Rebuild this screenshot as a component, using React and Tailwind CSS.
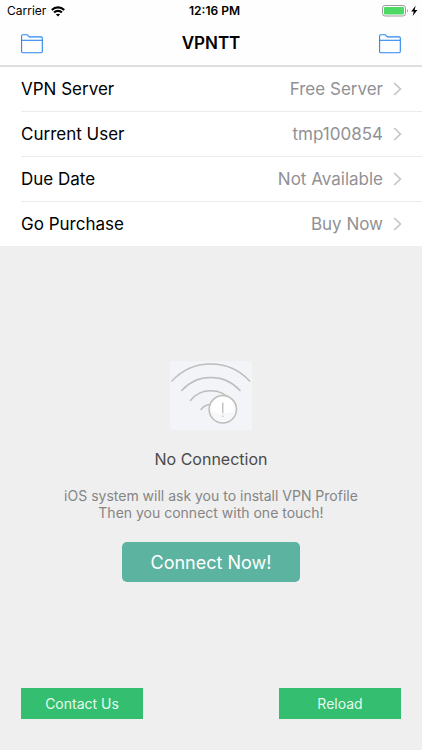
const rows = [
  { label: "VPN Server", value: "Free Server" },
  { label: "Current User", value: "tmp100854" },
  { label: "Due Date", value: "Not Available" },
  { label: "Go Purchase", value: "Buy Now" },
];

function WifiIcon() {
  return (
    <svg width="14" height="11" viewBox="0 0 14 11" fill="none" stroke="#000" strokeWidth="2.1" aria-hidden="true">
      <path d="M0.8 4C4.2 0.5 9.8 0.5 13.2 4" />
      <path d="M3.1 6.5C5.2 4.3 8.8 4.3 10.9 6.5" />
      <path d="M7 10.6L4.9 8.5C6.1 7.4 7.9 7.4 9.1 8.5Z" fill="#000" stroke="none" />
    </svg>
  );
}

function BatteryIcon() {
  return (
    <svg width="36" height="12" viewBox="0 0 36 12" aria-hidden="true">
      <rect x="0.5" y="0.5" width="23" height="10.5" rx="2.6" fill="#fff" stroke="#9b9b9b" />
      <rect x="2" y="2" width="20" height="7.5" rx="1.2" fill="#4cd964" />
      <path d="M25 4C26.2 4.4 26.2 7.1 25 7.5Z" fill="#9b9b9b" />
      <path d="M33.6 0.8L29.2 6.5H31.8L30.7 11L35.4 4.9H32.7Z" fill="#000" />
    </svg>
  );
}

function FolderIcon() {
  return (
    <svg width="22" height="20" viewBox="0 0 22 20" fill="none" stroke="#2b86ee" strokeWidth="1.1" strokeLinejoin="round" aria-hidden="true">
      <path d="M0.6 17.6V1.8Q0.6 0.7 1.7 0.7H5.8Q6.7 0.7 7.1 1.5L7.5 2.2Q7.9 2.9 8.8 2.9H20.2Q21.3 2.9 21.3 4V17.6Q21.3 18.7 20.2 18.7H1.7Q0.6 18.7 0.6 17.6Z" />
      <path d="M0.6 6.3H21.3" />
    </svg>
  );
}

function Chevron() {
  return (
    <svg width="9" height="14" viewBox="0 0 9 14" fill="none" stroke="#c5c5ca" strokeWidth="1.7" aria-hidden="true">
      <path d="M1.2 1L7.4 7L1.2 13" />
    </svg>
  );
}

function NoConnectionArt() {
  return (
    <svg width="82" height="69" viewBox="0 0 82 69" fill="none" stroke="#bdbdbd" strokeWidth="1.5" strokeLinecap="round" role="img" aria-label="No connection">
      <rect width="82" height="69" fill="#f3f4f7" stroke="none" />
      <path d="M2 20A52.8 52.8 0 0 1 79.6 20" />
      <path d="M11.7 29.5A39.3 39.3 0 0 1 70 29.5" />
      <path d="M20.5 39.5A26 26 0 0 1 61 39.5" />
      <path d="M31 48.5A12.5 12.5 0 0 1 51 48.5" />
      <circle cx="52.8" cy="48.3" r="13.7" fill="#f7f8f9" />
      <path d="M41.2 50A11.8 11.8 0 1 1 64.4 50Q52.8 55 41.2 50Z" fill="#fff" stroke="none" />
      <path d="M52.8 42V51.8" strokeWidth="1.3" />
      <circle cx="52.8" cy="55.3" r="0.8" fill="#bdbdbd" stroke="none" />
    </svg>
  );
}

export default function App() {
  return (
    <div className="flex min-h-screen flex-col bg-[#efefef] font-['Inter','Liberation_Sans',sans-serif] text-black">
      <header className="border-b-2 border-[#dedede] bg-[#fefefe]">
        <div className="grid h-[22px] grid-cols-3 items-center pl-[7px] pr-1 text-[12px] leading-[22px]">
          <div className="flex items-center gap-[5px]">
            <span>Carrier</span>
            <WifiIcon />
          </div>
          <div className="pl-1 text-center font-semibold">12:16 PM</div>
          <div className="flex justify-end">
            <BatteryIcon />
          </div>
        </div>
        <div className="flex h-[43px] items-center justify-between px-[21px]">
          <button type="button" aria-label="Open left folder">
            <FolderIcon />
          </button>
          <h1 className="text-[17px] font-semibold">VPNTT</h1>
          <button type="button" aria-label="Open right folder">
            <FolderIcon />
          </button>
        </div>
      </header>

      <ul className="divide-y divide-[#ebebed] bg-white pl-[21px]">
        {rows.map((row) => (
          <li key={row.label}>
            <button type="button" className="flex h-11 w-full items-center pr-5 text-[17px]">
              <span className="pt-0.5">{row.label}</span>
              <span className="ml-auto mr-[10px] pt-0.5 text-[#919195]">{row.value}</span>
              <Chevron />
            </button>
          </li>
        ))}
      </ul>

      <main className="flex flex-col items-center pt-[115px] text-center">
        <NoConnectionArt />
        <h2 className="mt-[17px] text-[16px] leading-6 text-[#4a4a4a]">No Connection</h2>
        <p className="mt-4 text-[14px] leading-[17px] text-[#858585]">
          iOS system will ask you to install VPN Profile
          <br />
          Then you connect with one touch!
        </p>
        <button type="button" className="mt-[21px] h-10 w-[178px] rounded-[5px] bg-[#5bb3a0] text-[18px] text-white">
          Connect Now!
        </button>
      </main>

      <footer className="mt-auto flex justify-between px-[21px] pt-8 pb-[31px] text-[14px] text-[#e6fbee]">
        <button type="button" className="h-[31px] w-[122px] bg-[#33be70]">Contact Us</button>
        <button type="button" className="h-[31px] w-[122px] bg-[#33be70]">Reload</button>
      </footer>
    </div>
  );
}
